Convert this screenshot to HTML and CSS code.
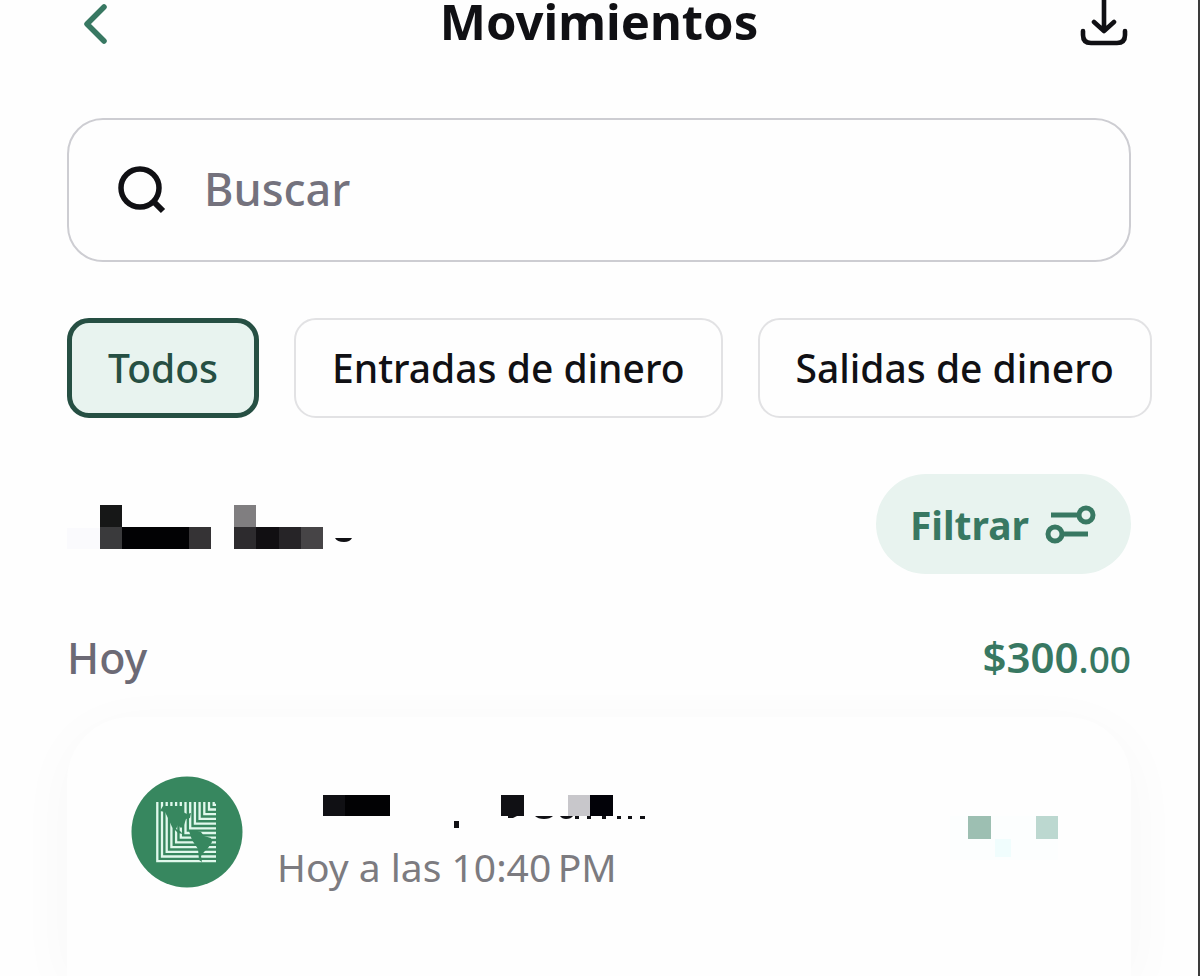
FILE: index.html
```html
<!DOCTYPE html>
<html lang="es">
<head>
  <meta charset="UTF-8" />
  <meta name="viewport" content="width=device-width, initial-scale=1.0"/>
  <title>Movimientos</title>
  <link rel="stylesheet" href="styles.css">
</head>
<body>

  <header class="top-bar">
    <a href="#" class="icon-link" aria-label="Volver">
      <svg width="56" height="48" viewBox="0 0 56 48" fill="none" stroke="#387862" stroke-width="5.5" stroke-linecap="round" stroke-linejoin="round">
        <path d="M37 7 L20 24 L37 41"/>
      </svg>
    </a>
    <h1>Movimientos</h1>
    <button type="button" class="icon-link" aria-label="Descargar">
      <svg width="56" height="48" viewBox="0 0 56 48" fill="none" stroke="#101014" stroke-width="4.6" stroke-linecap="round" stroke-linejoin="round">
        <path d="M29 -4 V31 M19 22 L29 31 L39 22"/>
        <path d="M8 31 V35 Q8 43 16 43 H42 Q50 43 50 35 V31"/>
      </svg>
    </button>
  </header>

  <main>
    <div class="search">
      <svg width="48" height="48" viewBox="0 0 48 48" fill="none" stroke="#101014" stroke-width="5.5">
        <circle cx="22" cy="22" r="19"/>
        <path d="M35 35 L45 45" stroke-width="6"/>
      </svg>
      <input type="text" id="search" placeholder="Buscar" aria-label="Buscar" />
    </div>

    <div class="chips">
      <button type="button" class="chip active">Todos</button>
      <button type="button" class="chip">Entradas de dinero</button>
      <button type="button" class="chip">Salidas de dinero</button>
    </div>

    <div class="row filter-row">
      <!-- hidden period name -->
      <svg width="300" height="52" viewBox="0 -6 300 52" shape-rendering="crispEdges" aria-hidden="true">
        <rect x="0" y="24" width="33" height="21" fill="#fafafd"/>
        <rect x="33" y="1" width="22" height="22" fill="#161717"/>
        <rect x="33" y="23" width="22" height="22" fill="#3a3a3c"/>
        <rect x="55" y="23" width="67" height="22" fill="#020204"/>
        <rect x="122" y="23" width="22" height="22" fill="#353335"/>
        <rect x="167" y="1" width="22" height="22" fill="#807e80"/>
        <rect x="167" y="23" width="22" height="22" fill="#2d2b2e"/>
        <rect x="189" y="23" width="23" height="22" fill="#110f12"/>
        <rect x="212" y="23" width="22" height="22" fill="#262427"/>
        <rect x="234" y="23" width="22" height="22" fill="#464446"/>
        <path d="M268 34 H285 Q283 38 277 38 Q270 38 268 34 Z" fill="#101014" shape-rendering="auto"/>
      </svg>
      <button type="button" class="filter-btn">
        Filtrar
        <svg width="52" height="40" viewBox="0 0 52 40" fill="none" stroke="#387862" stroke-width="5">
          <circle cx="41" cy="11" r="7"/>
          <path d="M6 11 H34"/>
          <circle cx="10" cy="30" r="7"/>
          <path d="M17 30 H43"/>
        </svg>
      </button>
    </div>

    <div class="row day-row">
      <h2>Hoy</h2>
      <p class="total">$300<span class="cents">.00</span></p>
    </div>

    <section class="card">
      <div class="movement">
        <svg width="112" height="112" viewBox="0 0 112 112" aria-hidden="true">
          <circle cx="56" cy="56" r="55.5" fill="#37875f"/>
          <g fill="none" stroke="#e0f8ec" stroke-width="2.3">
            <path d="M26.3 26 V85.2 H85"/>
            <path d="M31 26 V80.5 H85"/>
            <path d="M35.7 26 V75.8 H85"/>
            <path d="M40.4 26 V71.1 H85"/>
            <path d="M45.1 26 V66.4 H85"/>
            <path d="M49.8 26 V61.7 H85"/>
            <path d="M54.5 26 V57 H85"/>
            <path d="M59.2 26 V52.3 H85"/>
            <path d="M63.9 26 V47.6 H85"/>
            <path d="M68.6 26 V42.9 H85"/>
            <path d="M73.3 26 V38.2 H85"/>
            <path d="M78 26 V33.5 H85"/>
            <path d="M82.7 26 V28.8 H85"/>
          </g>
          <!-- the Americas -->
          <g fill="#37875f">
            <path d="M29 35 L32 30 L52 30 L52 36 L56 38 L60 37 L59 42 L55 43 L53 49 L50 52 L47 49 L45 53 L49 55 L52 58 L47 57 L41 51 L37 42 L34 36 Z"/>
            <path d="M58 55 L63 54 L70 56 L73 60 L80 62 L81 66 L77 72 L73 76 L70 80 L71 86 L68 84 L67 73 L61 64 Z"/>
          </g>
        </svg>
        <div class="details">
          <!-- hidden description -->
          <svg width="372" height="40" viewBox="0 0 372 40" fill="#101014" aria-hidden="true">
            <g shape-rendering="crispEdges">
              <rect x="46" y="7" width="22" height="21" fill="#101014"/>
              <rect x="68" y="7" width="45" height="21" fill="#020204"/>
              <rect x="224" y="7" width="23" height="21"/>
              <rect x="291" y="7" width="22" height="21" fill="#c8c7cb"/>
              <rect x="313" y="7" width="23" height="21" fill="#020208"/>
              <rect x="177" y="33" width="5" height="7"/>
              <rect x="298" y="28" width="4" height="3"/>
              <rect x="310" y="28" width="4" height="3"/>
              <rect x="325" y="28" width="4" height="3"/>
              <rect x="340" y="28" width="4" height="3"/>
              <rect x="351" y="28" width="4" height="3"/>
              <rect x="363" y="28" width="5" height="3"/>
            </g>
            <path d="M231 28 H240 L236 30 H231 Z"/>
            <path d="M258 28 H276 Q273 31 267 31 Q261 31 258 28 Z"/>
            <path d="M283 28 H296 Q294 31 289 31 Q285 31 283 28 Z"/>
          </svg>
          <p class="time">Hoy a las 10:40&thinsp;PM</p>
        </div>
        <!-- hidden amount -->
        <svg class="amount" width="108" height="44" viewBox="0 0 108 44" shape-rendering="crispEdges" aria-hidden="true">
          <rect x="0" y="0" width="108" height="44" fill="#fcfefe"/>
          <rect x="18" y="0" width="23" height="23" fill="#9dbfb2"/>
          <rect x="86" y="0" width="22" height="23" fill="#bcd8d0"/>
          <rect x="45" y="23" width="16" height="18" fill="#f0fdfd"/>
        </svg>
      </div>
    </section>
  </main>

</body>
</html>
```
FILE: styles.css
```css
* {
  box-sizing: border-box;
}
body {
  display: flex;
  flex-direction: column;
  min-height: 100vh;
  margin: 0;
  padding: 0 67px;
  overflow: hidden;
  border-right: 2px solid #3c3c3c;
  background-color: #fefefe;
  color: #101014;
  font-family: "Noto Sans", sans-serif;
}
h1, h2, p {
  margin: 0;
}
button, input {
  padding: 0;
  border: none;
  background: none;
  color: inherit;
  font-family: inherit;
}
svg {
  display: block;
  flex: none;
}
.top-bar {
  display: flex;
  justify-content: space-between;
  height: 48px;
  margin-bottom: 70px;
}
.icon-link {
  width: 56px;
  height: 48px;
}
h1 {
  font-size: 49px;
  font-weight: 700;
  line-height: 42px;
}
main {
  display: flex;
  flex: 1;
  flex-direction: column;
}
.search {
  display: flex;
  align-items: center;
  gap: 38px;
  height: 144px;
  padding: 0 49px;
  border: 2px solid #cdcdd2;
  border-radius: 36px;
}
.search input {
  flex: 1;
  height: 100px;
  padding-bottom: 4px;
  outline: none;
  font-size: 45px;
  font-weight: 500;
}
.search input::placeholder {
  color: #74727d;
  opacity: 1;
}
.chips {
  display: flex;
  gap: 35px;
  margin-top: 56px;
}
.chip {
  flex: none;
  height: 100px;
  padding: 0 36px 2px;
  border: 2px solid #e2e2e4;
  border-radius: 22px;
  font-size: 39px;
  font-weight: 500;
}
.chip.active {
  border: 5px solid #264f43;
  padding: 0 36px 2px;
  background-color: #e8f3ef;
  color: #264f43;
}
.row {
  display: flex;
  align-items: center;
  justify-content: space-between;
}
.filter-row {
  margin-top: 56px;
}
.filter-btn {
  display: flex;
  align-items: center;
  gap: 16px;
  height: 100px;
  padding: 0 34px;
  border-radius: 50px;
  background-color: #e8f3ef;
  color: #387862;
  font-size: 39px;
  font-weight: 700;
}
.day-row {
  height: 60px;
  margin-top: 54px;
  font-size: 42px;
  line-height: 60px;
}
h2 {
  color: #6c6a75;
  font-size: 43px;
  font-weight: 500;
}
.total {
  color: #387862;
  font-weight: 600;
}
.cents {
  font-size: 37px;
  font-weight: 500;
}
.card {
  flex: 1;
  margin-top: 29px;
  padding: 59px 64px;
  border-radius: 64px 64px 0 0;
  background-color: #fefefe;
  box-shadow: 0 12px 60px rgba(0, 0, 0, 0.03);
}
.movement {
  display: flex;
  align-items: flex-start;
}
.details {
  flex: 1;
  margin: 12px 0 0 34px;
}
.time {
  margin-top: 14px;
  color: #7c7b80;
  font-size: 39px;
  line-height: 50px;
}
.amount {
  margin: 40px 9px 0 0;
}
```
